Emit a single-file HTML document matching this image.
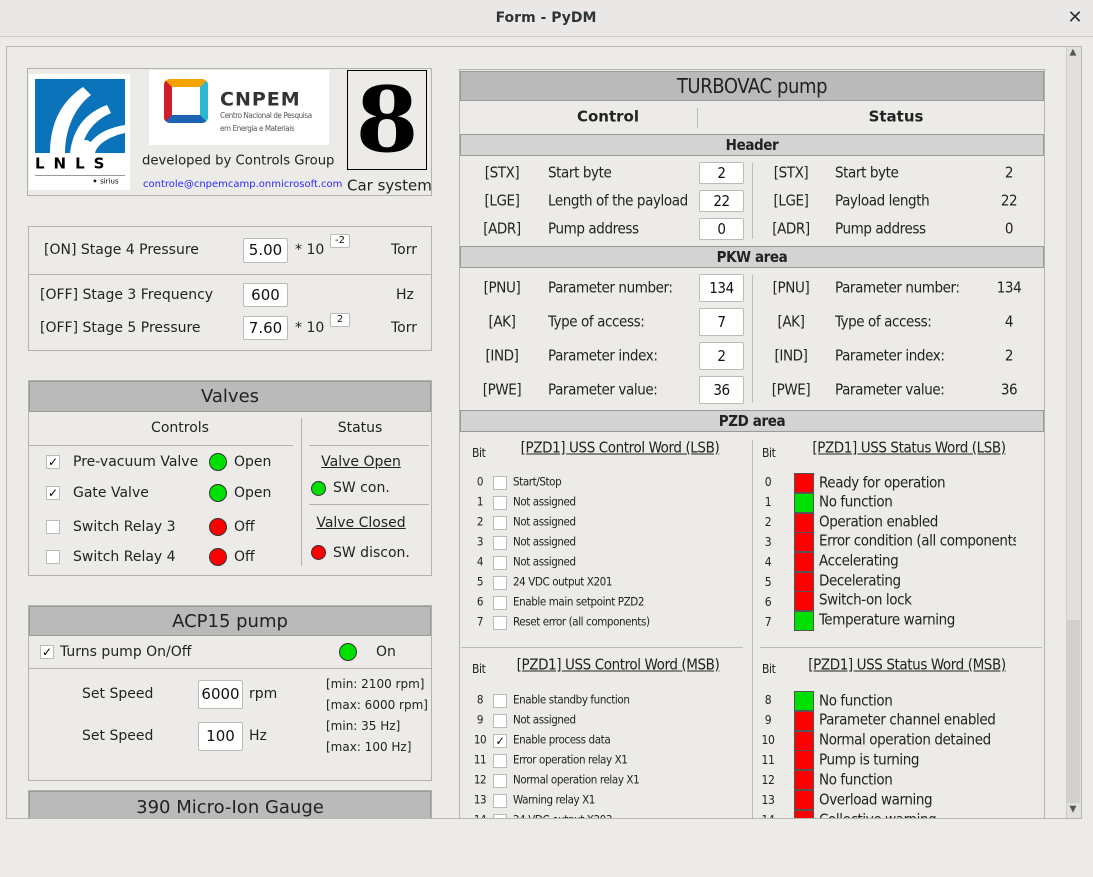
<!DOCTYPE html>
<html><head><meta charset="utf-8"><style>
*{margin:0;padding:0;box-sizing:border-box}
body{width:1093px;height:877px;background:#edebe7;font-family:"DejaVu Sans","Liberation Sans",sans-serif;color:#222;position:relative;overflow:hidden;font-size:14px}
.a{position:absolute;white-space:nowrap}
.t{position:absolute;white-space:nowrap;transform:translateY(-50%);line-height:1}
.c{transform:translate(-50%,-50%)}
.box{position:absolute;border:1px solid #b4b2ae}
.hd{position:absolute;background:#bababa;border:1px solid #999;text-align:center;color:#222}
.inp{position:absolute;background:#fff;border:1px solid #bdbbb7;border-radius:2px;text-align:center;color:#111}
.cb{position:absolute;width:14px;height:14px;background:#fff;border:1px solid #bbb;font-size:12px;line-height:12px;text-align:center;color:#000}
.led{position:absolute;border-radius:50%;border:1px solid #333}
.g{background:#00e000}.r{background:#f00}
.cd{font-family:"DejaVu Sans Condensed","DejaVu Sans",sans-serif;font-stretch:condensed;letter-spacing:-0.4px}
.sq{position:absolute;left:794px;width:20px;height:20px;border:1px solid #555}
u{text-decoration:underline}
</style></head><body>
<div class="a" style="left:0;top:0;width:1093px;height:37px;background:#e9e8e6;border-bottom:1px solid #cfcdc9"></div>
<div class="t c" style="left:546px;top:18px;font-weight:bold;font-size:14px;color:#2e3436">Form - PyDM</div>
<div class="t c" style="left:1075px;top:18px;font-size:18px;color:#2e3436">✕</div>

<div class="a" style="left:6px;top:46px;width:1076px;height:773px;border:1px solid #b9b7b3"></div>
<div class="a" style="left:0;top:0;width:1093px;height:818px;overflow:hidden">
<div class="box" style="left:27px;top:68px;width:405px;height:128px"></div>
<div class="a" style="left:29px;top:74px;width:101px;height:116px;background:#fff"></div>
<div class="a" style="left:35px;top:79px;width:90px;height:74px;background:#0b73b9;overflow:hidden">
<svg width="90" height="74"><g fill="#fff"><path d="M15 74 C15 40 30 20 48 8 L56 16 C40 28 30 50 30 74Z"/><path d="M35 74 C38 50 50 34 72 26 L76 34 C58 42 48 56 46 74Z"/><path d="M50 74 C55 60 66 50 90 46 L90 54 C72 58 62 66 60 74Z"/><circle cx="50" cy="70" r="9"/></g></svg></div>
<div class="t" style="left:35px;top:164px;font-weight:900;font-size:15px;letter-spacing:9px;color:#000">LNLS</div>
<div class="a" style="left:35px;top:175px;width:90px;height:1px;background:#999"></div>
<div class="t" style="left:92px;top:182px;font-size:7px;color:#000">✦ sirius</div>
<div class="a" style="left:149px;top:70px;width:180px;height:75px;background:#fff"></div>
<div class="a" style="left:164px;top:79px;width:44px;height:44px;border:8px solid;border-color:#f6a200 #2bb7d1 #1c64b4 #d11f2a;border-radius:6px"></div>
<div class="t" style="left:220px;top:100px;font-weight:900;font-size:19px;color:#333;letter-spacing:1px">CNPEM</div>
<div class="t cd" style="left:220px;top:116px;font-size:8px;color:#555">Centro Nacional de Pesquisa</div>
<div class="t cd" style="left:220px;top:129px;font-size:8px;color:#555">em Energia e Materiais</div>
<div class="t" style="left:142px;top:161px;font-size:13.2px">developed by Controls Group</div>
<div class="t" style="left:143px;top:185px;font-size:10px;color:#2a2aff">controle@cnpemcamp.onmicrosoft.com</div>
<div class="a" style="left:347px;top:70px;width:80px;height:100px;border:1px solid #000"></div>
<div class="t c" style="left:387px;top:120px;font-family:'DejaVu Serif','Liberation Serif',serif;font-weight:bold;font-size:90px;color:#000">8</div>
<div class="t" style="left:347px;top:186px;font-size:15px">Car system</div>

<div class="box" style="left:28px;top:226px;width:404px;height:125px"></div>
<div class="a" style="left:29px;top:274px;width:402px;height:1px;background:#b4b2ae"></div>
<div class="t" style="left:44px;top:250px">[ON] Stage 4 Pressure</div>
<div class="inp" style="left:243px;top:238px;width:45px;height:25px;line-height:23px;font-size:15px">5.00</div>
<div class="t" style="left:295px;top:250px">* 10</div>
<div class="inp" style="left:330px;top:234px;width:20px;height:14px;font-size:10px;line-height:12px">-2</div>
<div class="t" style="left:391px;top:250px">Torr</div>
<div class="t" style="left:40px;top:295px">[OFF] Stage 3 Frequency</div>
<div class="inp" style="left:243px;top:283px;width:45px;height:24px;line-height:22px;font-size:15px">600</div>
<div class="t" style="left:396px;top:295px">Hz</div>
<div class="t" style="left:40px;top:328px">[OFF] Stage 5 Pressure</div>
<div class="inp" style="left:243px;top:316px;width:45px;height:24px;line-height:22px;font-size:15px">7.60</div>
<div class="t" style="left:295px;top:328px">* 10</div>
<div class="inp" style="left:330px;top:313px;width:20px;height:14px;font-size:10px;line-height:12px">2</div>
<div class="t" style="left:391px;top:328px">Torr</div>

<div class="box" style="left:28px;top:380px;width:404px;height:196px"></div>
<div class="hd" style="left:29px;top:381px;width:402px;height:31px;line-height:30px;font-size:18px">Valves</div>
<div class="t c" style="left:180px;top:428px">Controls</div>
<div class="t c" style="left:360px;top:428px">Status</div>
<div class="a" style="left:301px;top:418px;width:1px;height:148px;background:#b4b2ae"></div>
<div class="a" style="left:29px;top:445px;width:264px;height:1px;background:#b4b2ae"></div>
<div class="a" style="left:309px;top:445px;width:120px;height:1px;background:#b4b2ae"></div>
<div class="a" style="left:309px;top:504px;width:120px;height:1px;background:#b4b2ae"></div>
<div class="cb" style="left:46px;top:455px">✓</div><div class="t" style="left:73px;top:462px">Pre-vacuum Valve</div><div class="led g" style="left:209px;top:453px;width:18px;height:18px"></div><div class="t" style="left:234px;top:462px">Open</div>
<div class="cb" style="left:46px;top:486px">✓</div><div class="t" style="left:73px;top:493px">Gate Valve</div><div class="led g" style="left:209px;top:484px;width:18px;height:18px"></div><div class="t" style="left:234px;top:493px">Open</div>
<div class="cb" style="left:46px;top:520px"></div><div class="t" style="left:73px;top:527px">Switch Relay 3</div><div class="led r" style="left:209px;top:518px;width:18px;height:18px"></div><div class="t" style="left:234px;top:527px">Off</div>
<div class="cb" style="left:46px;top:550px"></div><div class="t" style="left:73px;top:557px">Switch Relay 4</div><div class="led r" style="left:209px;top:548px;width:18px;height:18px"></div><div class="t" style="left:234px;top:557px">Off</div>
<div class="t c" style="left:361px;top:462px"><u>Valve Open</u></div>
<div class="led g" style="left:311px;top:481px;width:15px;height:15px"></div><div class="t" style="left:333px;top:488px">SW con.</div>
<div class="t c" style="left:361px;top:523px"><u>Valve Closed</u></div>
<div class="led r" style="left:311px;top:545px;width:15px;height:15px"></div><div class="t" style="left:333px;top:553px">SW discon.</div>

<div class="box" style="left:28px;top:605px;width:404px;height:176px"></div>
<div class="hd" style="left:29px;top:606px;width:402px;height:30px;line-height:29px;font-size:18px">ACP15 pump</div>
<div class="cb" style="left:40px;top:645px">✓</div><div class="t" style="left:60px;top:652px">Turns pump On/Off</div>
<div class="led g" style="left:339px;top:643px;width:18px;height:18px"></div><div class="t" style="left:376px;top:652px">On</div>
<div class="a" style="left:29px;top:668px;width:402px;height:1px;background:#b4b2ae"></div>
<div class="t" style="left:82px;top:694px">Set Speed</div>
<div class="inp" style="left:198px;top:680px;width:45px;height:29px;line-height:27px;font-size:15px">6000</div>
<div class="t" style="left:249px;top:694px">rpm</div>
<div class="t" style="left:82px;top:736px">Set Speed</div>
<div class="inp" style="left:198px;top:722px;width:45px;height:29px;line-height:27px;font-size:15px">100</div>
<div class="t" style="left:249px;top:736px">Hz</div>
<div class="t" style="left:326px;top:684px;font-size:12px">[min: 2100 rpm]</div>
<div class="t" style="left:326px;top:705px;font-size:12px">[max: 6000 rpm]</div>
<div class="t" style="left:326px;top:726px;font-size:12px">[min: 35 Hz]</div>
<div class="t" style="left:326px;top:747px;font-size:12px">[max: 100 Hz]</div>

<div class="box" style="left:28px;top:790px;width:404px;height:60px"></div>
<div class="hd" style="left:29px;top:791px;width:402px;height:30px;line-height:32px;font-size:18px">390 Micro-Ion Gauge</div>

<div class="box" style="left:459px;top:69px;width:586px;height:800px"></div>
<div class="hd cd" style="left:460px;top:71px;width:584px;height:30px;line-height:29px;font-size:20px">TURBOVAC pump</div>
<div class="t c" style="left:608px;top:117px;font-weight:bold;font-size:15px">Control</div>
<div class="t c" style="left:896px;top:117px;font-weight:bold;font-size:15px">Status</div>
<div class="a" style="left:697px;top:108px;width:1px;height:20px;background:#bbb"></div>
<div class="hd cd" style="left:460px;top:134px;width:584px;height:22px;line-height:20px;background:#d3d3d3;font-weight:bold;font-size:15px">Header</div>
<div class="hd cd" style="left:460px;top:246px;width:584px;height:22px;line-height:20px;background:#d3d3d3;font-weight:bold;font-size:15px">PKW area</div>
<div class="hd cd" style="left:460px;top:410px;width:584px;height:22px;line-height:20px;background:#d3d3d3;font-weight:bold;font-size:15px">PZD area</div>
<div class="a" style="left:752px;top:163px;width:1px;height:76px;background:#bbb"></div>
<div class="a" style="left:752px;top:275px;width:1px;height:128px;background:#bbb"></div>
<div class="cd" style="font-size:15px">
<div class="t c" style="left:502px;top:173px">[STX]</div><div class="t" style="left:548px;top:173px">Start byte</div><div class="inp" style="left:699px;top:162px;width:45px;height:22px;line-height:20px">2</div><div class="t c" style="left:791px;top:173px">[STX]</div><div class="t" style="left:835px;top:173px">Start byte</div><div class="t c" style="left:1009px;top:173px">2</div>
<div class="t c" style="left:502px;top:201px">[LGE]</div><div class="t" style="left:548px;top:201px">Length of the payload</div><div class="inp" style="left:699px;top:190px;width:45px;height:22px;line-height:20px">22</div><div class="t c" style="left:791px;top:201px">[LGE]</div><div class="t" style="left:835px;top:201px">Payload length</div><div class="t c" style="left:1009px;top:201px">22</div>
<div class="t c" style="left:502px;top:229px">[ADR]</div><div class="t" style="left:548px;top:229px">Pump address</div><div class="inp" style="left:699px;top:218px;width:45px;height:22px;line-height:20px">0</div><div class="t c" style="left:791px;top:229px">[ADR]</div><div class="t" style="left:835px;top:229px">Pump address</div><div class="t c" style="left:1009px;top:229px">0</div>
<div class="t c" style="left:502px;top:288px">[PNU]</div><div class="t" style="left:548px;top:288px">Parameter number:</div><div class="inp" style="left:699px;top:274px;width:45px;height:28px;line-height:26px">134</div><div class="t c" style="left:791px;top:288px">[PNU]</div><div class="t" style="left:835px;top:288px">Parameter number:</div><div class="t c" style="left:1009px;top:288px">134</div>
<div class="t c" style="left:502px;top:322px">[AK]</div><div class="t" style="left:548px;top:322px">Type of access:</div><div class="inp" style="left:699px;top:308px;width:45px;height:28px;line-height:26px">7</div><div class="t c" style="left:791px;top:322px">[AK]</div><div class="t" style="left:835px;top:322px">Type of access:</div><div class="t c" style="left:1009px;top:322px">4</div>
<div class="t c" style="left:502px;top:356px">[IND]</div><div class="t" style="left:548px;top:356px">Parameter index:</div><div class="inp" style="left:699px;top:342px;width:45px;height:28px;line-height:26px">2</div><div class="t c" style="left:791px;top:356px">[IND]</div><div class="t" style="left:835px;top:356px">Parameter index:</div><div class="t c" style="left:1009px;top:356px">2</div>
<div class="t c" style="left:502px;top:390px">[PWE]</div><div class="t" style="left:548px;top:390px">Parameter value:</div><div class="inp" style="left:699px;top:376px;width:45px;height:28px;line-height:26px">36</div><div class="t c" style="left:791px;top:390px">[PWE]</div><div class="t" style="left:835px;top:390px">Parameter value:</div><div class="t c" style="left:1009px;top:390px">36</div>
</div>

<div class="a" style="left:752px;top:440px;width:1px;height:400px;background:#bbb"></div>
<div class="a" style="left:461px;top:647px;width:282px;height:1px;background:#bbb"></div>
<div class="a" style="left:760px;top:647px;width:282px;height:1px;background:#bbb"></div>
<div class="cd">
<div class="t" style="left:472px;top:453px;font-size:12px">Bit</div><div class="t c" style="left:620px;top:448px;font-size:15px"><u>[PZD1] USS Control Word (LSB)</u></div>
<div class="t" style="left:762px;top:453px;font-size:12px">Bit</div><div class="t c" style="left:909px;top:448px;font-size:15px"><u>[PZD1] USS Status Word (LSB)</u></div>
<div class="t" style="left:472px;top:669px;font-size:12px">Bit</div><div class="t c" style="left:618px;top:665px;font-size:15px"><u>[PZD1] USS Control Word (MSB)</u></div>
<div class="t" style="left:762px;top:669px;font-size:12px">Bit</div><div class="t c" style="left:907px;top:665px;font-size:15px"><u>[PZD1] USS Status Word (MSB)</u></div>
</div>
<div class="cd" style="font-size:11.5px">
<div class="t c" style="left:480px;top:482px">0</div><div class="cb" style="left:493px;top:476px"></div><div class="t" style="left:513px;top:482px">Start/Stop</div>
<div class="t c" style="left:480px;top:502px">1</div><div class="cb" style="left:493px;top:496px"></div><div class="t" style="left:513px;top:502px">Not assigned</div>
<div class="t c" style="left:480px;top:522px">2</div><div class="cb" style="left:493px;top:516px"></div><div class="t" style="left:513px;top:522px">Not assigned</div>
<div class="t c" style="left:480px;top:542px">3</div><div class="cb" style="left:493px;top:536px"></div><div class="t" style="left:513px;top:542px">Not assigned</div>
<div class="t c" style="left:480px;top:562px">4</div><div class="cb" style="left:493px;top:556px"></div><div class="t" style="left:513px;top:562px">Not assigned</div>
<div class="t c" style="left:480px;top:582px">5</div><div class="cb" style="left:493px;top:576px"></div><div class="t" style="left:513px;top:582px">24 VDC output X201</div>
<div class="t c" style="left:480px;top:602px">6</div><div class="cb" style="left:493px;top:596px"></div><div class="t" style="left:513px;top:602px">Enable main setpoint PZD2</div>
<div class="t c" style="left:480px;top:622px">7</div><div class="cb" style="left:493px;top:616px"></div><div class="t" style="left:513px;top:622px">Reset error (all components)</div>
<div class="t c" style="left:480px;top:700px">8</div><div class="cb" style="left:493px;top:694px"></div><div class="t" style="left:513px;top:700px">Enable standby function</div>
<div class="t c" style="left:480px;top:720px">9</div><div class="cb" style="left:493px;top:714px"></div><div class="t" style="left:513px;top:720px">Not assigned</div>
<div class="t c" style="left:480px;top:740px">10</div><div class="cb" style="left:493px;top:734px">✓</div><div class="t" style="left:513px;top:740px">Enable process data</div>
<div class="t c" style="left:480px;top:760px">11</div><div class="cb" style="left:493px;top:754px"></div><div class="t" style="left:513px;top:760px">Error operation relay X1</div>
<div class="t c" style="left:480px;top:780px">12</div><div class="cb" style="left:493px;top:774px"></div><div class="t" style="left:513px;top:780px">Normal operation relay X1</div>
<div class="t c" style="left:480px;top:800px">13</div><div class="cb" style="left:493px;top:794px"></div><div class="t" style="left:513px;top:800px">Warning relay X1</div>
<div class="t c" style="left:480px;top:820px">14</div><div class="cb" style="left:493px;top:814px"></div><div class="t" style="left:513px;top:820px">24 VDC output X203</div>
</div>
<div class="cd" style="font-size:15px">
<div class="a" style="left:819px;top:440px;width:197px;height:400px;overflow:hidden">
<div class="t" style="left:0;top:43px">Ready for operation</div>
<div class="t" style="left:0;top:62px">No function</div>
<div class="t" style="left:0;top:82px">Operation enabled</div>
<div class="t" style="left:0;top:101px">Error condition (all components)</div>
<div class="t" style="left:0;top:121px">Accelerating</div>
<div class="t" style="left:0;top:141px">Decelerating</div>
<div class="t" style="left:0;top:160px">Switch-on lock</div>
<div class="t" style="left:0;top:180px">Temperature warning</div>
<div class="t" style="left:0;top:261px">No function</div>
<div class="t" style="left:0;top:280px">Parameter channel enabled</div>
<div class="t" style="left:0;top:300px">Normal operation detained</div>
<div class="t" style="left:0;top:320px">Pump is turning</div>
<div class="t" style="left:0;top:340px">No function</div>
<div class="t" style="left:0;top:360px">Overload warning</div>
<div class="t" style="left:0;top:380px">Collective warning</div>
</div>
<div style="font-size:12px">
<div class="t c" style="left:768px;top:482px">0</div><div class="t c" style="left:768px;top:502px">1</div><div class="t c" style="left:768px;top:522px">2</div><div class="t c" style="left:768px;top:542px">3</div><div class="t c" style="left:768px;top:562px">4</div><div class="t c" style="left:768px;top:582px">5</div><div class="t c" style="left:768px;top:602px">6</div><div class="t c" style="left:768px;top:622px">7</div>
<div class="t c" style="left:768px;top:700px">8</div><div class="t c" style="left:768px;top:720px">9</div><div class="t c" style="left:768px;top:740px">10</div><div class="t c" style="left:768px;top:760px">11</div><div class="t c" style="left:768px;top:780px">12</div><div class="t c" style="left:768px;top:800px">13</div><div class="t c" style="left:768px;top:820px">14</div>
</div>
</div>
<div class="sq r" style="top:473px"></div><div class="sq g" style="top:493px"></div><div class="sq r" style="top:513px"></div><div class="sq r" style="top:532px"></div><div class="sq r" style="top:552px"></div><div class="sq r" style="top:572px"></div><div class="sq r" style="top:591px"></div><div class="sq g" style="top:611px"></div>
<div class="sq g" style="top:691px"></div><div class="sq r" style="top:711px"></div><div class="sq r" style="top:731px"></div><div class="sq r" style="top:750px"></div><div class="sq r" style="top:770px"></div><div class="sq r" style="top:790px"></div><div class="sq r" style="top:810px"></div>

<div class="a" style="left:1066px;top:47px;width:15px;height:771px;background:#e2e0dc;border-left:1px solid #cfcdc9"></div>
<div class="a" style="left:1067px;top:620px;width:13px;height:183px;background:#d2d0cc"></div>
<div class="t c" style="left:1073px;top:53px;font-size:9px;color:#555">▲</div>
<div class="t c" style="left:1073px;top:810px;font-size:9px;color:#555">▼</div>
</div>
</body></html>
